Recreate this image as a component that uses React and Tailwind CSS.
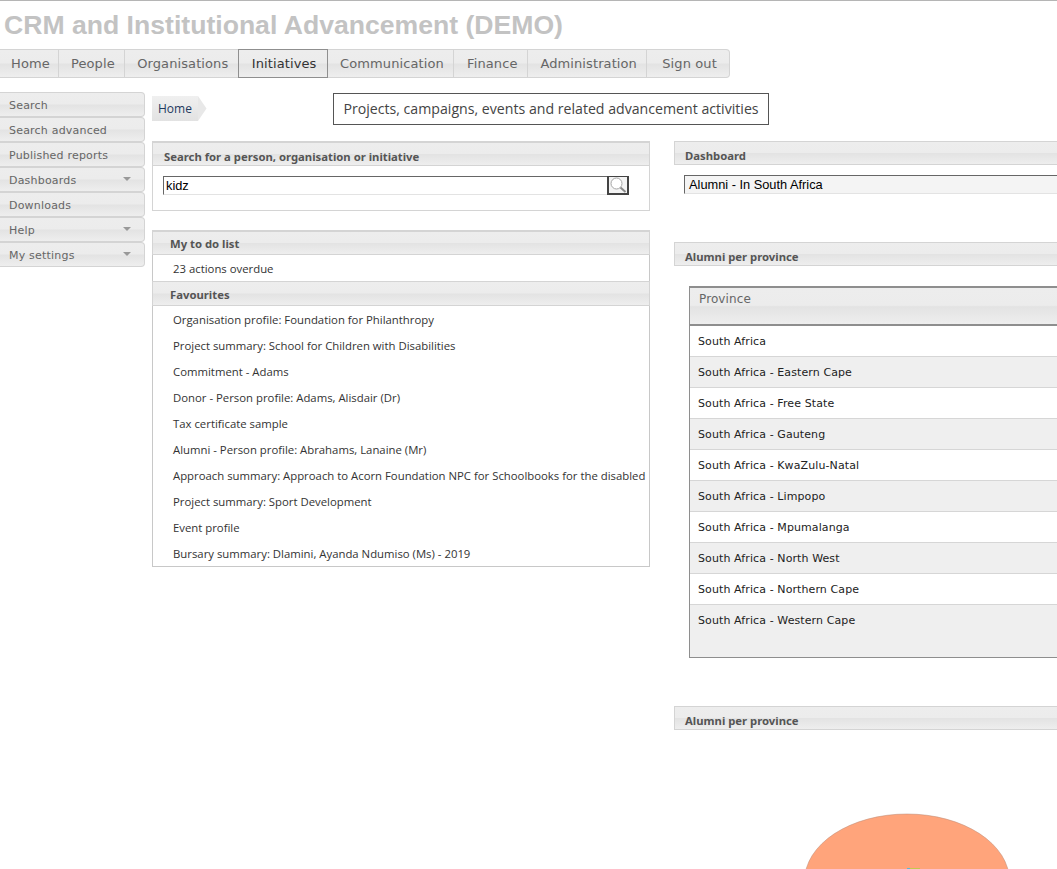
const barBg = "bg-[linear-gradient(to_bottom,#ededed_0%,#ececec_48%,#e3e3e3_52%,#eeeeee_100%)]";
const dejavu = "font-['DejaVu_Sans',sans-serif]";
const segoe = "font-['Open_Sans',sans-serif]";

const navItems = ["Home", "People", "Organisations", "Initiatives", "Communication", "Finance", "Administration", "Sign out"];
const navWidths = ["w-[59px]", "w-[66px]", "w-[114px]", "w-[90px]", "w-[127px]", "w-[74px]", "w-[119px]", "w-[82px]"];

const sideItems = [
  { label: "Search" },
  { label: "Search advanced" },
  { label: "Published reports" },
  { label: "Dashboards", arrow: true },
  { label: "Downloads" },
  { label: "Help", arrow: true },
  { label: "My settings", arrow: true },
];

const favourites = [
  "Organisation profile: Foundation for Philanthropy",
  "Project summary: School for Children with Disabilities",
  "Commitment - Adams",
  "Donor - Person profile: Adams, Alisdair (Dr)",
  "Tax certificate sample",
  "Alumni - Person profile: Abrahams, Lanaine (Mr)",
  "Approach summary: Approach to Acorn Foundation NPC for Schoolbooks for the disabled",
  "Project summary: Sport Development",
  "Event profile",
  "Bursary summary: Dlamini, Ayanda Ndumiso (Ms) - 2019",
];

const provinces = [
  "South Africa",
  "South Africa - Eastern Cape",
  "South Africa - Free State",
  "South Africa - Gauteng",
  "South Africa - KwaZulu-Natal",
  "South Africa - Limpopo",
  "South Africa - Mpumalanga",
  "South Africa - North West",
  "South Africa - Northern Cape",
  "South Africa - Western Cape",
];

function PanelHeader({ children, className = "" }) {
  return (
    <div className={`border border-[#d4d4d4] ${barBg} text-[11.3px] font-bold text-[#555555] font-['Noto_Sans',sans-serif] ${className}`}>
      {children}
    </div>
  );
}

export default function App() {
  return (
    <div className="h-[869px] w-[1057px] overflow-hidden bg-white border-t border-[#b5b5b5]">
      <h1 className="pl-[4px] pt-[9px] h-[48px] text-[26.6px] font-bold leading-[30px] whitespace-nowrap text-[#c3c3c3] font-['Liberation_Sans',sans-serif]">
        CRM and Institutional Advancement (DEMO)
      </h1>

      <nav className={`flex h-[29px] w-[730px] rounded-r-[4px] border border-l-0 border-[#d4d4d4] ${barBg} text-[13px] tracking-[0.1px] ${dejavu}`}>
        {navItems.map((item, i) => (
          <div
            key={item}
            className={`${navWidths[i]} flex items-center justify-center border-r pl-[3px] ${
              item === "Initiatives"
                ? "-my-px -ml-px border border-[#8f8f8f] text-[#333333]"
                : "border-[#d4d4d4] text-[#666666] last:border-r-0"
            }`}
          >
            {item}
          </div>
        ))}
      </nav>

      <div className="mt-[14px] flex items-start">
        <aside className={`w-[145px] shrink-0 text-[11px] tracking-[0.2px] text-[#666666] ${dejavu}`}>
          {sideItems.map((item) => (
            <div
              key={item.label}
              className={`flex h-[25px] items-center justify-between rounded-r-[4px] border border-l-0 border-[#d4d4d4] pl-[9px] pr-[13px] pt-[3px] ${barBg}`}
            >
              <span>{item.label}</span>
              {item.arrow && <span className="mb-[5px] h-0 w-0 border-x-[4px] border-t-[4px] border-x-transparent border-t-[#999999]" />}
            </div>
          ))}
        </aside>

        <main className="ml-[7px] w-[498px] shrink-0">
          <div className="relative h-[49px]">
            <div className={`mt-[4px] inline-flex h-[25px] items-center ${segoe}`}>
              <span className={`flex h-[25px] w-[46px] items-center pl-[6px] text-[12px] text-[#1f3a5f] bg-[linear-gradient(to_bottom,#f0f0f0,#e2e2e2)]`}>
                Home
              </span>
              <svg width="9" height="25" viewBox="0 0 9 25">
                <path d="M0 0 L8.5 12.5 L0 25 Z" fill="#e8e8e8" />
              </svg>
            </div>
            <div className={`absolute left-[181px] top-[1px] flex h-[32px] w-[436px] items-center justify-center border border-[#555555] bg-white pb-[1px] text-[14.15px] text-[#444444] whitespace-nowrap ${segoe}`}>
              Projects, campaigns, events and related advancement activities
            </div>
          </div>

          <section className="h-[70px] border border-t-0 border-[#d4d4d4]">
            <PanelHeader className="-mx-px h-[25px] border-t-2 pl-[11px] leading-[28px]">Search for a person, organisation or initiative</PanelHeader>
            <div className="ml-[10px] mt-[10px] flex h-[19px] w-[466px]">
              <div className="h-[19px] flex-1 border-l border-t border-b border-[#666666] border-b-[#e3e3e3] pl-[2px] text-[12.8px] leading-[17px] text-black font-['Liberation_Sans',sans-serif]">
                kidz
              </div>
              <button className="flex h-[19px] w-[22px] items-center justify-center border border-[#444444] border-r-2 border-b-2 border-l-2 bg-[#f4f4f4]">
                <svg width="18" height="16" viewBox="0 0 18 16" fill="none">
                  <circle cx="7.5" cy="6.5" r="5.5" fill="#ffffff" stroke="#a5a5a5" strokeWidth="1" />
                  <path d="M11.5 10.5 L16.5 15" stroke="#8a8a8a" strokeWidth="2" />
                </svg>
              </button>
            </div>
          </section>

          <section className={`mt-[19px] h-[337px] border border-t-0 border-[#c8c8c8] ${segoe} text-[11.35px] text-[#333333]`}>
            <PanelHeader className="-mx-px h-[25px] border-t-2 pl-[17px] leading-[24px]">My to do list</PanelHeader>
            <div className="h-[26px] pl-[20px] leading-[28px]">23 actions overdue</div>
            <PanelHeader className="-mx-px h-[25px] pl-[17px] leading-[26px]">Favourites</PanelHeader>
            {favourites.map((fav) => (
              <div key={fav} className="h-[26px] overflow-hidden whitespace-nowrap pl-[20px] leading-[28px]">
                {fav}
              </div>
            ))}
          </section>
        </main>

        <div className="ml-[24px] mt-[49px] w-[383px] shrink-0">
          <PanelHeader className="h-[24px] border-r-0 pl-[10px] leading-[28px]">Dashboard</PanelHeader>
          <div className="ml-[10px] mt-[10px] h-[19px] border-l border-t border-b border-[#666666] border-b-[#e3e3e3] bg-[#f4f4f4] pl-[4px] text-[12.8px] leading-[17px] text-black font-['Liberation_Sans',sans-serif]">
            Alumni - In South Africa
          </div>

          <PanelHeader className="mt-[48px] h-[24px] border-r-0 pl-[10px] leading-[28px]">Alumni per province</PanelHeader>

          <div className={`ml-[15px] mt-[20px] h-[372px] border-y border-l border-[#8e8e8e] border-t-2 text-[11px] tracking-[0.1px] text-[#222222] ${dejavu}`}>
            <div className={`h-[38px] border-b-2 border-[#8e8e8e] pl-[9px] pt-[2px] text-[12px] text-[#666666] ${barBg}`}>Province</div>
            {provinces.map((name, i) => (
              <div
                key={name}
                className={`border-b border-[#d6d6d6] pl-[8px] last:border-b-0 ${i % 2 ? "bg-[#efefef]" : "bg-white"} ${i === 9 ? "h-[52px] pt-[8px]" : "flex h-[31px] items-center pt-[2px]"}`}
              >
                {name}
              </div>
            ))}
          </div>

          <PanelHeader className="mt-[48px] h-[24px] border-r-0 pl-[10px] leading-[28px]">Alumni per province</PanelHeader>

          <svg className="ml-[130px] mt-[83px] block" width="206" height="56" viewBox="0 0 206 56">
            <ellipse cx="103" cy="68" rx="102.5" ry="67" fill="#ffa47b" stroke="#b98b76" strokeWidth="0.5" />
            <path d="M103 55 H106 V56 H103 Z" fill="#5bb8d8" />
            <path d="M106 55 H116 V56 H106 Z" fill="#c4c84e" />
          </svg>
        </div>
      </div>
    </div>
  );
}
